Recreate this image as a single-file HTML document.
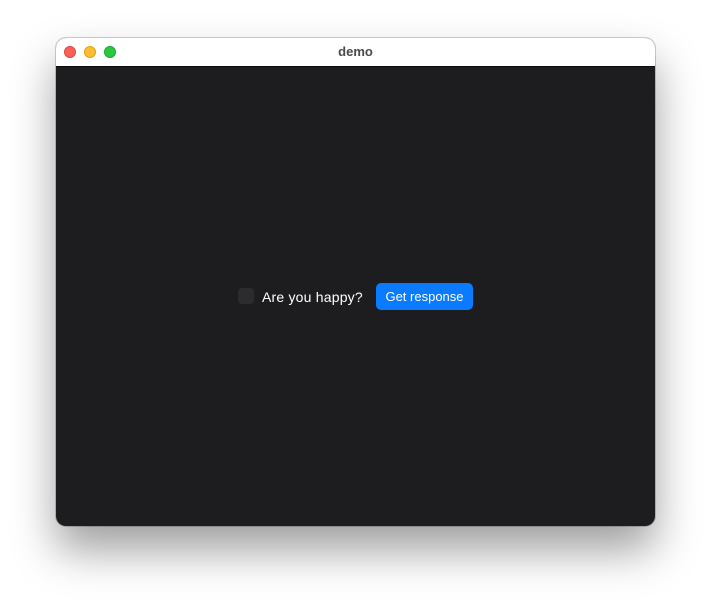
<!DOCTYPE html>
<html><head><meta charset="utf-8"><style>
html,body{margin:0;padding:0;width:711px;height:600px;background:#fff;overflow:hidden;font-family:"Liberation Sans",sans-serif}
.win{position:absolute;left:56px;top:38px;width:599px;height:488px;border-radius:10px;overflow:hidden;background:#1d1d1f;box-shadow:0 24px 44px rgba(0,0,0,0.38),0 0 0 1px rgba(0,0,0,0.18)}
.tb{position:absolute;left:0;top:0;width:100%;height:28px;background:#fff;border-bottom:1px solid #0b0b0b;box-sizing:content-box}
.dot{position:absolute;top:8px;width:12px;height:12px;border-radius:50%}
.title{position:absolute;left:0;right:0;top:6px;text-align:center;font-size:13px;font-weight:bold;color:#4a4a4a}
.cb{position:absolute;left:182px;top:250px;width:16px;height:16px;border-radius:4px;background:#2c2c2e}
.lbl{position:absolute;left:206px;top:251px;font-size:14px;color:#fff;line-height:17px;letter-spacing:0.2px}
.btn{position:absolute;left:320px;top:245px;width:97px;height:27px;border-radius:5px;background:#0a7aff;color:#fff;font-size:13px;text-align:center;line-height:27px}
</style></head><body>
<div class="win">
<div class="tb">
<div class="dot" style="left:8px;background:#fe5f57;border:0.5px solid #e2463f;box-sizing:border-box"></div>
<div class="dot" style="left:28px;background:#febc2e;border:0.5px solid #e1a116;box-sizing:border-box"></div>
<div class="dot" style="left:48px;background:#28c840;border:0.5px solid #14ae2b;box-sizing:border-box"></div>
<div class="title">demo</div>
</div>
<div class="cb"></div>
<div class="lbl">Are you happy?</div>
<div class="btn">Get response</div>
</div>
</body></html>
